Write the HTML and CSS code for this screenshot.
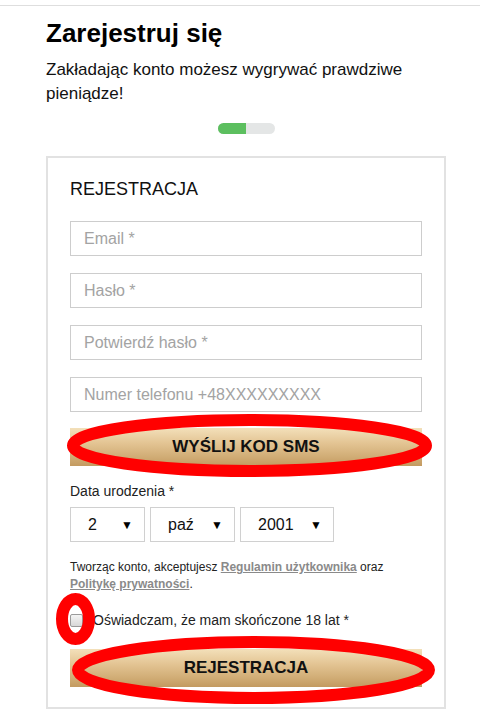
FILE: index.html
```html
<!DOCTYPE html>
<html lang="pl">
<head>
<meta charset="utf-8">
<title>Zarejestruj się</title>
<link rel="stylesheet" href="styles.css">
</head>
<body>
<div class="topbar"></div>
<main class="page">
  <h1 class="title">Zarejestruj się</h1>
  <p class="lead">Zakładając konto możesz wygrywać prawdziwe pieniądze!</p>
  <div class="progress"><div class="progress-fill"></div></div>

  <section class="card">
    <h2 class="card-title">REJESTRACJA</h2>
    <div class="fields">
      <div class="input">Email *</div>
      <div class="input">Hasło *</div>
      <div class="input">Potwierdź hasło *</div>
      <div class="input">Numer telefonu +48XXXXXXXXX</div>
    </div>
    <button class="btn btn-sms">WYŚLIJ KOD SMS</button>

    <div class="label">Data urodzenia *</div>
    <div class="dates">
      <div class="select sel-day"><span>2</span><span class="arrow">▼</span></div>
      <div class="select sel-month"><span>paź</span><span class="arrow">▼</span></div>
      <div class="select sel-year"><span>2001</span><span class="arrow">▼</span></div>
    </div>

    <p class="terms">Tworząc konto, akceptujesz <a href="#">Regulamin użytkownika</a> oraz <a href="#">Politykę prywatności</a>.</p>

    <label class="check"><span class="box"></span><span>Oświadczam, że mam skończone 18 lat *</span></label>

    <button class="btn btn-reg">REJESTRACJA</button>
  </section>
</main>

<svg class="marks" width="480" height="724" viewBox="0 0 480 724" aria-hidden="true">
  <ellipse cx="249.5" cy="445.5" rx="176.5" ry="25.5" fill="none" stroke="#ff0000" stroke-width="12"/>
  <ellipse cx="75.5" cy="619" rx="13.5" ry="20" fill="none" stroke="#ff0000" stroke-width="12"/>
  <ellipse cx="253.5" cy="670" rx="175.5" ry="28" fill="none" stroke="#ff0000" stroke-width="12"/>
</svg>
</body>
</html>
```

FILE: styles.css
```css
html, body {
  margin: 0;
  padding: 0;
  background: #fff;
}
body {
  font-family: "Liberation Sans", Arial, sans-serif;
  color: #111;
  position: relative;
  width: 480px;
  height: 724px;
  overflow: hidden;
}
.topbar {
  height: 5px;
  border-bottom: 1px solid #dedede;
}
.page {
  width: 400px;
  padding: 0 34px 0 46px;
}
.title {
  margin: 12px 0 0;
  font-size: 26px;
  line-height: 30px;
  font-weight: bold;
  color: #000;
}
.lead {
  margin: 10px 0 0;
  font-size: 17px;
  line-height: 24px;
  color: #111;
}
.progress {
  margin: 17px auto 0;
  width: 57px;
  height: 11px;
  border-radius: 6px;
  background: #e4e6e6;
  overflow: hidden;
  display: flex;
}
.progress-fill {
  width: 28px;
  background: #5cbf5f;
}
.card {
  margin-top: 22px;
  border: 2px solid #e2e2e2;
  padding: 21px 22px 20px;
  display: flex;
  flex-direction: column;
}
.card-title {
  margin: 0;
  font-size: 18px;
  line-height: 21px;
  font-weight: normal;
  color: #111;
}
.fields {
  margin-top: 21px;
  display: flex;
  flex-direction: column;
  gap: 17px;
}
.input {
  height: 33px;
  border: 1px solid #cdcdcd;
  padding: 0 13px;
  font-size: 16px;
  line-height: 33px;
  color: #a3a3a3;
}
.btn {
  display: block;
  width: 100%;
  border: 0;
  padding: 0;
  font-family: "Liberation Sans", Arial, sans-serif;
  font-weight: bold;
  font-size: 17px;
  color: #111;
  background: linear-gradient(to bottom, #f3e0ba 0%, #e3c493 40%, #d1ad76 75%, #c39a60 100%);
}
.btn-sms {
  margin-top: 16px;
  height: 38px;
}
.btn-reg {
  margin-top: 21px;
  height: 38px;
}
.label {
  margin-top: 17px;
  font-size: 14px;
  line-height: 16px;
  color: #222;
}
.dates {
  margin-top: 8px;
  display: flex;
  gap: 5px;
}
.select {
  height: 33px;
  border: 1px solid #d0d0d0;
  display: flex;
  align-items: center;
  justify-content: space-between;
  padding: 0 11px 0 17px;
  font-size: 16px;
  color: #111;
}
.arrow {
  font-size: 12px;
  color: #000;
}
.sel-day { width: 45px; }
.sel-month { width: 55px; }
.sel-year { width: 64px; }
.terms {
  margin: 17px 0 0;
  font-size: 12px;
  line-height: 17px;
  color: #222;
}
.terms a {
  color: #8a8a8a;
  font-weight: bold;
  text-decoration: underline;
}
.check {
  margin-top: 19px;
  display: flex;
  align-items: center;
  gap: 10px;
  font-size: 14px;
  line-height: 16px;
  color: #222;
}
.box {
  width: 11px;
  height: 11px;
  border: 1px solid #9a9a9a;
  border-radius: 2px;
  background: linear-gradient(#f4f4f4, #d8d8d8);
  flex: none;
}
.marks {
  position: absolute;
  left: 0;
  top: 0;
  pointer-events: none;
}
```
